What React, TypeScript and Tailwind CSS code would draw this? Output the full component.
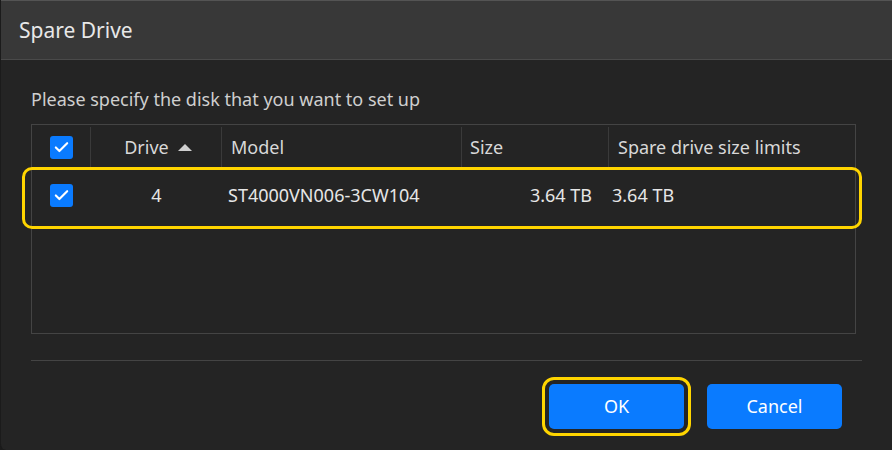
import { Check } from "lucide-react";

const CheckBox = () => (
  <span className="flex h-[23px] w-[23px] items-center justify-center rounded-[3px] bg-[#0a7bff]">
    <Check className="h-[17px] w-[17px] text-white" strokeWidth={3} />
  </span>
);

const App = () => {
  return (
    <div
      className="h-[450px] w-full overflow-hidden bg-[#1b1b1b]"
      style={{ fontFamily: '"Noto Sans", "Open Sans", sans-serif' }}
    >
      <div className="flex h-[450px] w-[900px] flex-col overflow-hidden rounded-bl-[6px] border-l border-[#1b1b1b] bg-[#242424]">
        {/* Title bar */}
        <div className="flex h-[60px] items-center border-t border-b border-t-[#545454] border-b-[#4a4a4a] bg-[#383838] pl-[18px] pt-[2px]">
          <span className="text-[21px] text-[#e8e8e8]">Spare Drive</span>
        </div>

        <div className="flex flex-col px-[30px]">
          <p className="mt-[27px] text-[18px] leading-[24px] text-[#cfcfcf]">
            Please specify the disk that you want to set up
          </p>

          {/* Table */}
          <div className="mt-[13px] h-[210px] w-[825px] border border-[#444]">
            <div className="grid h-[42px] grid-cols-[59px_131px_240px_147px_246px] pt-[2px] text-[18px] text-[#d8d8d8]">
              <div className="flex items-center justify-center border-r border-[#3a3a3a]">
                <CheckBox />
              </div>
              <div className="flex items-center justify-center gap-[9px] border-r border-[#3a3a3a] pl-[4px]">
                <span>Drive</span>
                <span className="h-0 w-0 border-x-[7px] border-b-[7px] border-x-transparent border-b-[#cfcfcf]" />
              </div>
              <div className="flex items-center border-r border-[#3a3a3a] pl-[9px]">Model</div>
              <div className="flex items-center border-r border-[#3a3a3a] pl-[8px]">Size</div>
              <div className="flex items-center pl-[9px]">Spare drive size limits</div>
            </div>

            <div className="relative grid h-[54px] grid-cols-[59px_131px_240px_147px_246px] pt-[2px] text-[18px] text-[#e6e6e6]">
              <div className="pointer-events-none absolute -bottom-[8px] -left-[10px] -right-[7px] top-0 rounded-[10px] border-[3px] border-[#ffd500]" />
              <div className="flex items-center justify-center">
                <CheckBox />
              </div>
              <div className="flex items-center justify-center">4</div>
              <div className="flex items-center pl-[6px]">ST4000VN006-3CW104</div>
              <div className="flex items-center justify-end pr-[17px]">3.64 TB</div>
              <div className="flex items-center pl-[3px]">3.64 TB</div>
            </div>
          </div>

          <div className="mt-[26px] h-px w-[831px] bg-[#444]" />

          {/* Buttons */}
          <div className="mt-[23px] flex w-[831px] justify-end gap-[23px] pr-[20px]">
            <button className="h-[45px] w-[135px] rounded-[5px] bg-[#0a7bff] text-[18px] text-white outline-[3px] outline-offset-[4px] outline-[#ffd500] outline-solid">
              OK
            </button>
            <button className="h-[45px] w-[135px] rounded-[5px] bg-[#0a7bff] text-[18px] text-white">
              Cancel
            </button>
          </div>
        </div>
      </div>
    </div>
  );
};

export default App;
